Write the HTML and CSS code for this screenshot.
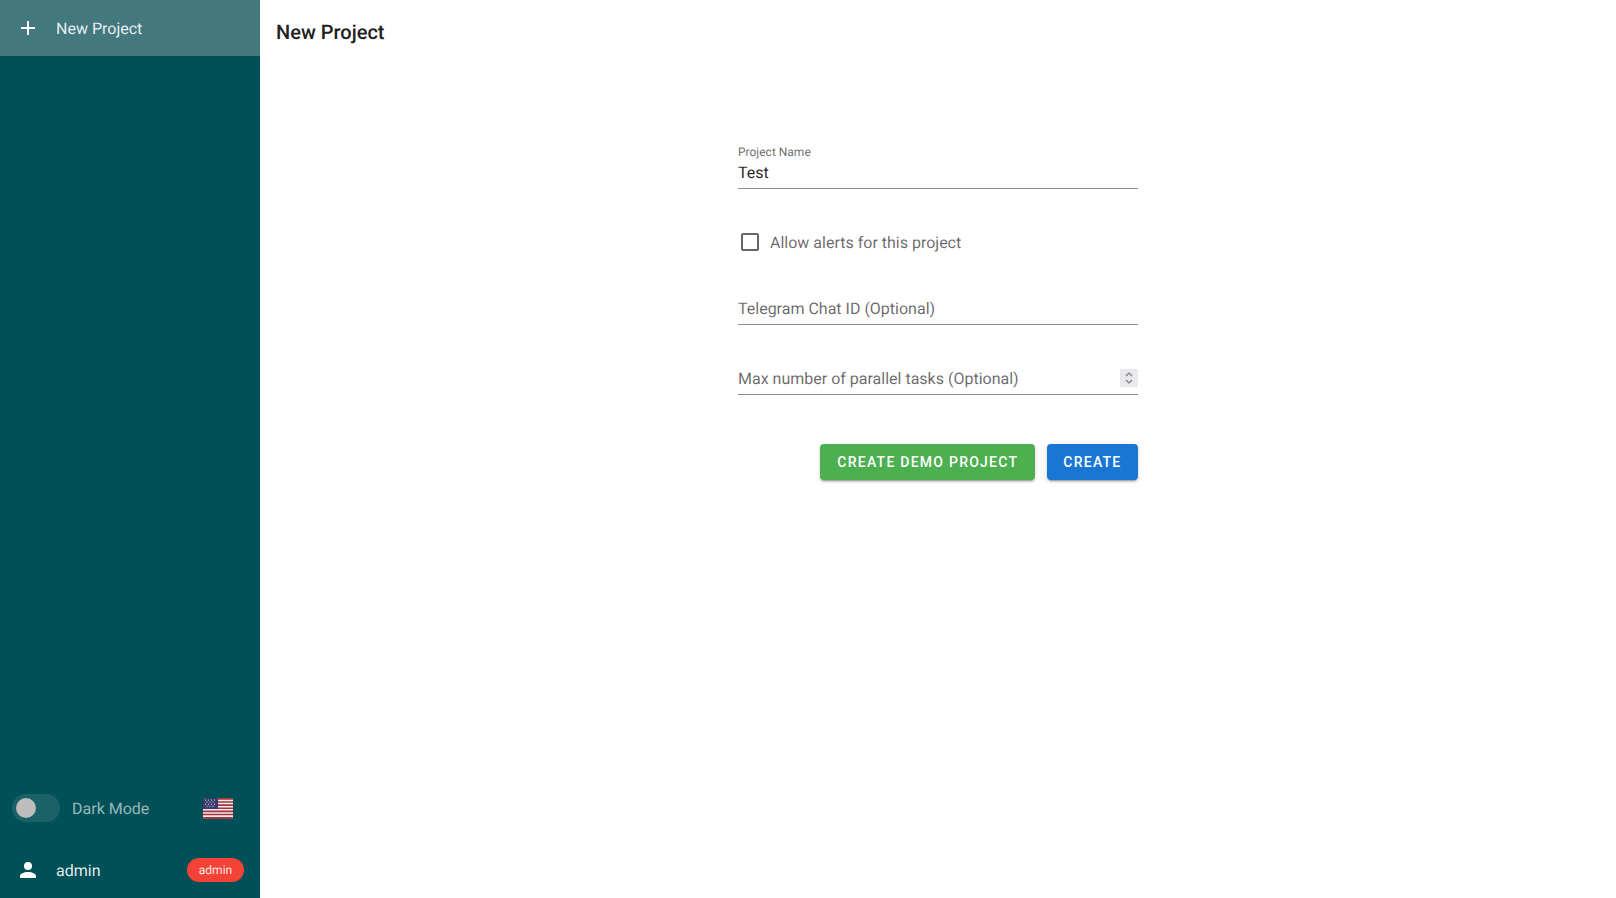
FILE: index.html
```html
<!DOCTYPE html>
<html lang="en">
<head>
<meta charset="utf-8">
<title>New Project</title>
<link rel="stylesheet" href="styles.css">
</head>
<body>
<div class="app">
  <aside class="sidebar">
    <div class="nav-item active">
      <svg class="nav-icon" viewBox="0 0 24 24"><path d="M19 13h-6v6h-2v-6H5v-2h6V5h2v6h6v2z"/></svg>
      <span>New Project</span>
    </div>
    <div class="spacer"></div>
    <div class="dark-row">
      <div class="switch"><span class="track"></span><span class="thumb"></span></div>
      <span class="dark-label">Dark Mode</span>
      <svg class="flag" viewBox="0 0 30 20" preserveAspectRatio="none">
        <defs><clipPath id="flagclip"><rect width="30" height="20" rx="2"/></clipPath></defs>
        <g clip-path="url(#flagclip)">
          <rect width="30" height="20" fill="#eee9ea"/>
          <path d="M0 0h30v1.6H0zM0 3h30v1.5H0zM0 6h30v1.5H0zM0 9h30v1.5H0zM0 12h30v1.5H0zM0 15h30v1.5H0zM0 18h30v2H0z" fill="#a5343f"/>
          <rect width="15" height="10.5" fill="#3c3b6e"/>
          <path d="M2 2h1M5 2h1M8 2h1M11 2h1M3.5 4h1M6.5 4h1M9.5 4h1M2 6h1M5 6h1M8 6h1M11 6h1M3.5 8h1M6.5 8h1M9.5 8h1" stroke="#b5b5d0" stroke-width="1.2"/>
        </g>
      </svg>
    </div>
    <div class="user-row">
      <svg class="nav-icon" viewBox="0 0 24 24"><path d="M12 4a4 4 0 1 1 0 8 4 4 0 0 1 0-8zm0 10c4.42 0 8 1.79 8 4v2H4v-2c0-2.21 3.58-4 8-4z"/></svg>
      <span class="user-name">admin</span>
      <span class="badge">admin</span>
    </div>
  </aside>
  <main class="main">
    <h1 class="title">New Project</h1>
    <form class="form">
      <div class="field filled">
        <label class="small-label">Project Name</label>
        <div class="value">Test</div>
      </div>
      <div class="check-row">
        <span class="checkbox"></span>
        <span class="check-label">Allow alerts for this project</span>
      </div>
      <div class="field">
        <div class="placeholder">Telegram Chat ID (Optional)</div>
      </div>
      <div class="field">
        <div class="placeholder">Max number of parallel tasks (Optional)</div>
        <span class="spin">
          <svg viewBox="0 0 18 18"><path d="M6 7l3-3 3 3M6 11l3 3 3-3" fill="none" stroke="#7a7a7a" stroke-width="1.2"/></svg>
        </span>
      </div>
      <div class="actions">
        <button type="button" class="btn green">Create Demo Project</button>
        <button type="button" class="btn blue">Create</button>
      </div>
    </form>
  </main>
</div>
</body>
</html>
```

FILE: styles.css
```css
* { box-sizing: border-box; }
html, body { margin: 0; height: 100%; }
body { font-family: Roboto, sans-serif; background: #fff; color: rgba(0,0,0,.87); overflow: hidden; text-rendering: geometricPrecision; }
.app { display: flex; height: 898px; }

.sidebar { width: 260px; flex: none; background: #005057; display: flex; flex-direction: column; color: #fff; }
.nav-item { height: 56px; display: flex; align-items: center; padding: 0 16px; font-size: 16px; gap: 16px; }
.nav-item.active { background: #42787e; color: rgba(255,255,255,.9); }
.nav-icon { width: 24px; height: 24px; fill: #fff; flex: none; }
.spacer { flex: 1; }

.dark-row { display: flex; align-items: center; height: 28px; margin-bottom: 20px; padding-left: 12px; }
.switch { position: relative; width: 48px; height: 28px; flex: none; }
.track { display: block; width: 48px; height: 28px; border-radius: 14px; background: rgba(255,255,255,.1); }
.thumb { position: absolute; left: 4px; top: 4px; width: 20px; height: 20px; border-radius: 50%; background: #bdbdbd; }
.dark-label { margin-left: 12px; font-size: 16px; color: rgba(255,255,255,.6); width: 131px; }
.flag { width: 30px; height: 21px; flex: none; }

.user-row { display: flex; align-items: center; height: 56px; padding: 0 16px; }
.user-name { margin-left: 16px; font-size: 16px; flex: 1; color: rgba(255,255,255,.9); }
.badge { background: #f44336; color: rgba(255,255,255,.9); font-size: 12px; height: 24px; width: 57px; border-radius: 12px; display: flex; align-items: center; justify-content: center; }

.main { flex: 1; min-width: 0; }
.title { margin: 0; padding: 20px 16px 0; font-size: 20px; line-height: 24px; font-weight: 500; color: #212121; }
.form { width: 400px; margin: 100px auto 0; }

.field { position: relative; height: 42px; border-bottom: 1px solid #8c8c8c; display: flex; flex-direction: column; justify-content: flex-end; margin-bottom: 28px; }
.field.filled { height: 45px; margin-bottom: 41px; }
.small-label { font-size: 12px; line-height: 16px; margin-bottom: 1px; color: rgba(0,0,0,.6); }
.value { font-size: 16px; line-height: 24px; padding-bottom: 3px; color: rgba(0,0,0,.87); }
.placeholder { font-size: 16px; line-height: 24px; padding-bottom: 3px; color: rgba(0,0,0,.6); }
.spin { position: absolute; right: 0; top: 16px; width: 18px; height: 18px; background: #e9e9ed; display: block; }
.spin svg { display: block; width: 18px; height: 18px; }

.check-row { display: flex; align-items: center; height: 24px; margin-bottom: 29px; padding-left: 3px; }
.checkbox { width: 18px; height: 18px; border: 2px solid #666; border-radius: 2px; flex: none; }
.check-label { margin-left: 11px; font-size: 16px; color: rgba(0,0,0,.6); }

.actions { display: flex; justify-content: flex-end; gap: 12px; margin-top: 49px; }
.btn { height: 36px; padding: 0 16.5px; border: 0; border-radius: 4px; color: #fff; font-family: Roboto, sans-serif; font-size: 14px; font-weight: 500; letter-spacing: 1.25px; text-transform: uppercase; box-shadow: 0 3px 1px -2px rgba(0,0,0,.2), 0 2px 2px 0 rgba(0,0,0,.14), 0 1px 5px 0 rgba(0,0,0,.12); }
.green { background: #4caf50; padding-left: 17.5px; }
.blue { background: #1976d2; }
```
